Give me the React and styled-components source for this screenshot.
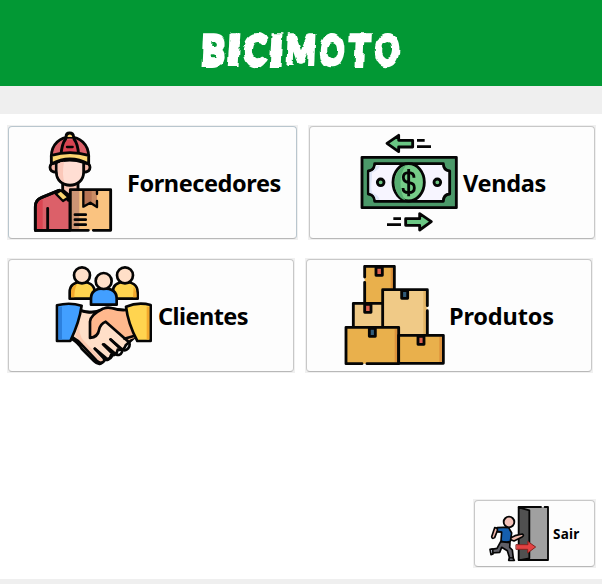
import React from "react";
import styled, { createGlobalStyle } from "styled-components";

const GlobalStyle = createGlobalStyle`
  * { box-sizing: border-box; }
  body { margin: 0; background: #fff; font-family: "Noto Sans", "Open Sans", sans-serif; overflow: hidden; }
`;

const Window = styled.div`
  display: flex;
  flex-direction: column;
  width: 602px;
  height: 584px;
  background: #fff;
`;

const Header = styled.header`
  display: flex;
  justify-content: center;
  height: 86px;
  padding-top: 28px;
  background: #029834;
`;

const Title = styled.h1`
  display: flex;
  margin: 0;
  width: 202px;
  height: 44px;
  color: #fff;
  font: 900 41px/44px Lato, "Liberation Sans", sans-serif;
  -webkit-text-stroke: 4px #fff;
  text-shadow: 1px 0 0 #fff;
  filter: url(#rough-edges);
`;

const FilterDefs = styled.svg`
  display: block;
  flex: none;
  width: 0;
  height: 0;
`;

const Letter = styled.span`
  flex: 0 0 ${(p) => p.$width}px;
  min-width: 0;
  display: flex;
  justify-content: center;
  transform: scaleX(${(p) => p.$stretch}) skewX(-3deg);
`;

const Strip = styled.div`
  height: ${(p) => p.$height}px;
  background: #efefef;
`;

const Content = styled.main`
  display: flex;
  flex-direction: column;
  flex: 1;
  padding: 11px 6px 11px 7px;
`;

const Row = styled.div`
  display: flex;
  gap: 10px;
  margin-bottom: 18px;
`;

const Footer = styled.footer`
  display: flex;
  justify-content: flex-end;
  margin-top: auto;
`;

const Button = styled.button`
  display: flex;
  align-items: center;
  width: ${(p) => p.$width}px;
  height: ${(p) => p.$height}px;
  padding: 0 0 0 ${(p) => p.$inset}px;
  border: 1px solid ${(p) => (p.$focused ? "#b9c6ce" : "#c8c8c8")};
  border-bottom-color: #b8b8b8;
  border-radius: 4px;
  background: #fdfdfd;
  color: #000;
  font-family: inherit;
`;

const ButtonFrame = styled.div`
  padding: 1px;
  background: #f0f0f0;
`;

const Label = styled.span`
  margin-left: ${(p) => p.$gap}px;
  font-size: ${(p) => p.$size || 23.5}px;
  line-height: 32px;
  font-weight: 700;
  letter-spacing: ${(p) => p.$spacing || 0}px;
  white-space: nowrap;
`;

const Icon = styled.svg`
  flex: none;
  display: block;
  stroke: #050505;
  stroke-width: ${(p) => p.$line || 8.5}px;
  stroke-linejoin: round;
  stroke-linecap: ${(p) => p.$cap || "round"};
  fill: none;
`;

function CourierIcon() {
  return (
    <Icon width="80" height="104" viewBox="99 39 240 312">
      <path d="M188 194v22l24 20 22-20v-22" fill="#f8c5b4" />
      <path d="M106 337V266q0-20 18-27l52-22 29 30 5-5v95z" fill="#dc6069" />
      <path d="M110 333V266q0-15 18-22v89z" fill="#d94451" stroke="none" />
      <path d="M106 337V266q0-20 18-27l54-22M143 271v64" />
      <path d="M167 227l16-10 23 21-17 11z" fill="#fbd570" strokeWidth="7" />
      <path d="M168 135q-18-1-18 13 0 15 20 15M252 135q18-1 18 13 0 15-20 15" fill="#f7b8a6" />
      <path d="M169 133q40-13 82 0v29c0 53-82 53-82 0z" fill="#ffded3" />
      <path d="M173 138q8-7 19-7-7 40 2 63-20-8-21-38z" fill="#fbc8b9" stroke="none" />
      <path d="M154 116c0-78 112-78 112 0z" fill="#dc6069" />
      <path d="M188 112q0-33 14-47h16q14 14 14 47z" fill="#d94451" stroke="none" />
      <path d="M183 112q2-34 14-49M236 112q-2-34-14-49" />
      <path d="M201 87h17" strokeWidth="7" />
      <path d="M154 112q56-16 112 0v26q-56-30-112 0z" fill="#fbd570" />
      <path d="M198 57q0-12 11-12t12 12" fill="#fbd570" />
      <rect x="211" y="215" width="121" height="122" rx="3" fill="#fac380" stroke="none" />
      <path d="M214 218h24v116h-24z" fill="#cc9474" stroke="none" />
      <path d="M250 219v47l21-12 20 13v-48z" fill="#b77454" stroke="none" />
      <path d="M275 219h16v45l-16-9z" fill="#ca8c64" stroke="none" />
      <path d="M250 219v47l21-12 20 13v-18M291 228v-9" strokeWidth="7" />
      <path d="M106 337h159M280 337h52V215H211v120" />
      <path d="M225 290h32M225 305h32M225 320h32" />
    </Icon>
  );
}

function MoneyIcon() {
  return (
    <Icon width="100" height="100" viewBox="57 43 300 300" $cap="butt">
      <path d="M141 74l35-24v15h42v20h-42v14z" fill="#6bc784" />
      <path d="M231 65h23M231 84h42M160 300h23M141 318h42" />
      <path d="M274 309l-35-24v15h-42v20h42v14z" fill="#6bc784" />
      <rect x="66" y="116" width="283" height="151" fill="#4b9969" />
      <path d="M104 135h206q0 19 19 22v69q-19 2-19 22H104q0-20-19-22v-69q19-3 19-22z" fill="#f7f5ff" />
      <path d="M107 141h13q-3 12-24 21v17q-5 28 1 45 16 2 22 19h-12q-2-16-19-21v-61q18-4 19-20z" fill="#dfe5f7" stroke="none" />
      <ellipse cx="206" cy="191" rx="47" ry="56" fill="#76cc88" />
      <path d="M198 140c-44 12-44 92-2 105-19-26-20-76 2-105z" fill="#57ae71" stroke="none" />
      <path d="M206 151v82M222 177q0-15-16-15t-16 14 17 16 16 16q0 14-17 14t-17-14" />
      <circle cx="122" cy="191" r="10" fill="#6ec683" />
      <circle cx="292" cy="191" r="10" fill="#6ec683" />
    </Icon>
  );
}

function ClientsIcon() {
  return (
    <Icon width="98" height="100" viewBox="46 31 294 300" $line={8}>
      <path d="M90 129v-19c0-24 16-31 37-31s38 9 38 31v19zM219 129v-19c0-24 16-31 37-31s38 9 38 31v19z" fill="#ffd44f" />
      <path d="M94 125v-17q2-18 18-22-8 14-8 39zM282 93q9 10 9 32h-11z" fill="#f3a92d" stroke="none" />
      <circle cx="127" cy="59" r="24" fill="#ffdfc8" />
      <circle cx="256" cy="59" r="24" fill="#ffdfc8" />
      <path d="M154 147v-18c0-22 14-31 38-31s39 9 39 31v18z" fill="#429fff" />
      <circle cx="192" cy="76" r="24" fill="#ffdfc8" />
      <path d="M121 164q43 14 81-7l63 8 20 80-27 24q-5 17-24 13-4 19-20 16-5 19-20 14-12 23-31 4l-36-36q-10-18-33-32z" fill="#ffdfc8" />
      <path d="M113 182q4 32-6 59l29 32 42 45 14-2-57-58q-22-20-14-60z" fill="#fccab0" stroke="none" />
      <path d="M261 163q-24 1-42-7-13-4-26 2-42 15-43 41v49q20-4 24-23 1-13 22-29l65 58 32-9-14-80z" fill="#ffb88d" stroke="none" />
      <path d="M121 164q31 14 70-5 13-6 27-1 21 7 42 5M188 160q-36 18-37 38v49q24-3 27-24 4-19 20-25l65 57q13 10 2 24-9 10-24-1l-29-27M193 266l35 29q13 8 19-6M166 279l33 28q11 7 18-6M97 244q18 10 31 25l43 46q16 14 25-3M254 249l31-9" />
      <path d="M214 252l32 28M190 266l31 31M165 279l30 32" />
      <path d="M52 149q37-10 74 1-7 50-34 106H52z" fill="#429fff" />
      <path d="M57 153h10v98H57z" fill="#2c80de" stroke="none" />
      <path d="M333 148q-37-10-74 5 6 51 34 103h40z" fill="#ffd44f" />
      <path d="M321 153h8v98h-8z" fill="#f3a92d" stroke="none" />
    </Icon>
  );
}

function BoxesIcon() {
  return (
    <Icon width="102" height="102" viewBox="28 30 306 306">
      <path d="M90 34h89v112H90z" fill="#e9b04c" stroke="none" />
      <path d="M168 37h8v64h-8z" fill="#dd923c" stroke="none" />
      <path d="M90 66V34h89v67M90 82v62" />
      <path d="M124 37h19v24h-19z" fill="#dd604e" />
      <path d="M56 145h87v72H56" fill="#f0ca87" stroke="none" />
      <path d="M56 217V145h87" />
      <path d="M90 148h19v24H90z" fill="#dd604e" />
      <path d="M144 104h134v136H144z" fill="#f0ca87" stroke="none" />
      <path d="M266 107h8v131h-8z" fill="#e3b465" stroke="none" />
      <path d="M278 152v-48H144v112M278 167v73" />
      <path d="M201 107h18v23h-18z" fill="#315b79" />
      <path d="M34 217h158v109H34z" fill="#e9b04c" stroke="none" />
      <path d="M180 221h8v101h-8z" fill="#dd923c" stroke="none" />
      <path d="M82 326H34V217h158v109H97" />
      <path d="M104 220h18v24h-18z" fill="#315b79" />
      <path d="M192 241h134v84H192z" fill="#e9b04c" />
      <path d="M314 246h8v75h-8z" fill="#dd923c" stroke="none" />
      <path d="M250 244h18v24h-18z" fill="#dd604e" />
    </Icon>
  );
}

function ExitIcon() {
  return (
    <Icon width="62" height="58" viewBox="69 43 186 174" $line={5.5}>
      <path d="M161 50l87-1v159h-87z" fill="#a0a0a0" stroke="none" />
      <path d="M161 50l32 9v144l-24 5h-8z" fill="#505050" />
      <path d="M161 49h67M239 49h10v159h-87" />
      <path d="M121 111l9 34 20-10 22-5q7 4-1 9l-24 12-22-9z" fill="#eebaad" strokeWidth="5" />
      <path d="M100 113l-11-2-9 27q1 8 9 3l7-18 16 1" fill="#efb5aa" strokeWidth="5" />
      <path d="M97 111q19-2 34 0l9 16-4 25q-12 6-28-1l2-27-13-2z" fill="#155fae" strokeWidth="5" />
      <circle cx="132" cy="94" r="16" fill="#f4c2b9" />
      <path d="M107 153l28 3-1 14 8 8 3 25h-11l-7-23-17-10-6 15-23 2-2-11 17-3z" fill="#606067" strokeWidth="5" />
      <path d="M83 175l-8 1 3 16 6-2zM133 202h11l4 7h-17z" fill="#c0c9da" strokeWidth="5" />
      <path d="M154 162h35l-1-10 24 17-24 18v-11h-34z" fill="#e34242" stroke="#842420" strokeWidth="3" />
    </Icon>
  );
}

const titleLetters = [
  ["B", 26, 0.85],
  ["I", 16, 1.05],
  ["C", 26, 0.78],
  ["I", 16, 1.05],
  ["M", 34, 0.75],
  ["O", 28, 0.71],
  ["T", 27, 0.84],
  ["O", 28, 0.71],
];

export default function App() {
  return (
    <>
      <GlobalStyle />
      <Window>
        <FilterDefs aria-hidden="true">
          <filter id="rough-edges" x="-5%" y="-10%" width="110%" height="120%" colorInterpolationFilters="sRGB">
            <feTurbulence type="fractalNoise" baseFrequency="0.07 0.14" numOctaves="1" seed="4" result="noise" />
            <feDisplacementMap in="SourceGraphic" in2="noise" scale="6" xChannelSelector="R" yChannelSelector="G" />
          </filter>
        </FilterDefs>
        <Header>
          <Title aria-label="BICIMOTO">
            {titleLetters.map(([letter, width, stretch], i) => (
              <Letter key={i} $width={width} $stretch={stretch}>{letter}</Letter>
            ))}
          </Title>
        </Header>
        <Strip $height={28} />
        <Content>
          <Row>
            <ButtonFrame>
              <Button $width={289} $height={113} $inset={24} $focused>
                <CourierIcon />
                <Label $gap={14} $spacing={-0.42}>Fornecedores</Label>
              </Button>
            </ButtonFrame>
            <ButtonFrame>
              <Button $width={286} $height={113} $inset={49}>
                <MoneyIcon />
                <Label $gap={4} $spacing={-0.3}>Vendas</Label>
              </Button>
            </ButtonFrame>
          </Row>
          <Row>
            <ButtonFrame>
              <Button $width={286} $height={113} $inset={46}>
                <ClientsIcon />
                <Label $gap={5} $spacing={-0.55}>Clientes</Label>
              </Button>
            </ButtonFrame>
            <ButtonFrame>
              <Button $width={286} $height={113} $inset={37}>
                <BoxesIcon />
                <Label $gap={3} $spacing={-0.15}>Produtos</Label>
              </Button>
            </ButtonFrame>
          </Row>
          <Footer>
            <ButtonFrame>
              <Button $width={121} $height={67} $inset={13}>
                <ExitIcon />
                <Label $gap={3} $size={13.5} $spacing={0.2}>Sair</Label>
              </Button>
            </ButtonFrame>
          </Footer>
        </Content>
        <Strip $height={5} />
      </Window>
    </>
  );
}
